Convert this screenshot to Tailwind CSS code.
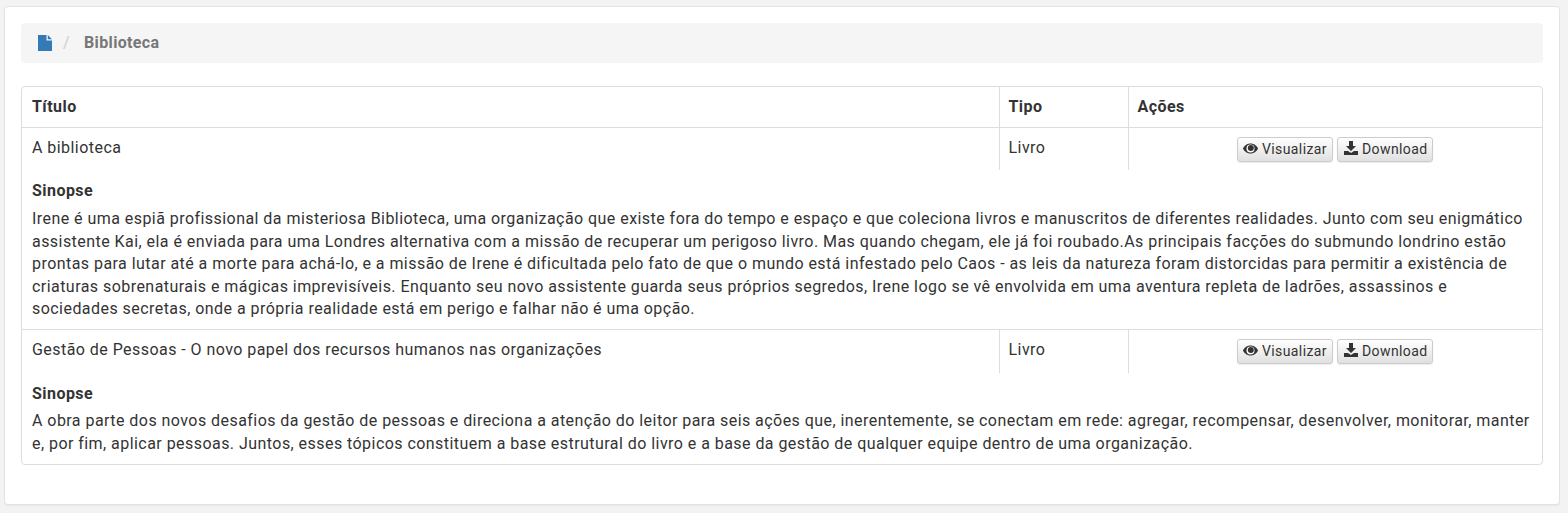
<!DOCTYPE html>
<html lang="pt">
<head>
<meta charset="utf-8">
<script src="https://cdn.jsdelivr.net/npm/@tailwindcss/browser@4"></script>
</head>
<body class="bg-[#f3f3f3] h-[513px] overflow-hidden font-['Roboto',sans-serif] text-[16px] leading-[22.4px] text-[#333] tracking-[0.45px]">
<div class="ml-[4px] mr-[8px] mt-[6px] h-[499px] bg-white rounded-[4px] border border-[#e3e3e3] shadow-[0_1px_1px_rgba(0,0,0,0.05)] px-[16px] pt-[16px]">
  <nav class="h-[40px] bg-[#f5f5f5] rounded-[4px] flex items-center pl-[17px]">
    <svg class="w-[14px] h-[16px]" viewBox="0 0 14 16"><path fill="#337ab7" d="M0 0h8.500v5.500H14V16H0zM9.800 0 14 4.200H9.800z"/></svg>
    <span class="ml-[11px] text-[#ccc]">/</span>
    <span class="ml-[14px] font-bold text-[#777] tracking-[0.35px]">Biblioteca</span>
  </nav>
  <div class="mt-[23px] border border-[#ddd] rounded-[4px] overflow-hidden">
    <table class="w-full border-collapse table-fixed">
      <colgroup><col class="w-[977px]"><col class="w-[129px]"><col></colgroup>
      <thead>
        <tr class="h-[40px] border-b border-[#ddd] text-left">
          <th class="pl-[10px] pr-[9px] font-bold">Título</th>
          <th class="px-[9px] font-bold border-l border-[#ddd]">Tipo</th>
          <th class="px-[9px] font-bold border-l border-[#ddd]">Ações</th>
        </tr>
      </thead>
      <tbody>
        <tr class="h-[43px]">
          <td class="pl-[10px] pr-[9px] pb-[1px]">A biblioteca</td>
          <td class="px-[9px] pb-[1px] border-l border-[#ddd]">Livro</td>
          <td class="border-l border-[#ddd] pt-[1px]">
            <div class="flex justify-center gap-[4px] pr-[1px] tracking-[0.4px]">
              <button class="h-[25px] px-[5px] flex items-center gap-[4px] text-[14px] rounded-[3px] border border-[#ccc] bg-linear-to-b from-white to-[#e0e0e0] shadow-[0_1px_1px_rgba(0,0,0,0.08)]">
                <svg class="w-[15px] h-[14px]" viewBox="0 0 15 14"><path fill="#333" d="M7.500 1.500C11 1.500 13.800 3.800 15 6.500 13.800 9.200 11 11.500 7.500 11.500S1.200 9.200 0 6.500C1.200 3.800 4 1.500 7.500 1.500z"/><circle cx="7.500" cy="6.500" r="4" fill="#fff"/><circle cx="7.800" cy="6" r="3" fill="#333"/></svg>
                Visualizar</button>
              <button class="h-[25px] pl-[6px] pr-[4px] flex items-center gap-[4px] text-[14px] rounded-[3px] border border-[#ccc] bg-linear-to-b from-white to-[#e0e0e0] shadow-[0_1px_1px_rgba(0,0,0,0.08)]">
                <svg class="w-[14px] h-[14px] mb-[2px]" viewBox="0 0 14 14"><path fill="#333" d="M5 0h4v5h3L7 10 2 5h3zM0 10h4l3 2 3-2h4v4H0z"/></svg>
                Download</button>
            </div>
          </td>
        </tr>
        <tr class="border-b border-[#ddd]">
          <td colspan="3" class="pl-[10px] pr-[9px] pt-[10px] pb-[9px]">
            <p class="font-bold mb-[6px]">Sinopse</p>
            <p>Irene é uma espiã profissional da misteriosa Biblioteca, uma organização que existe fora do tempo e espaço e que coleciona livros e manuscritos de diferentes realidades. Junto com seu enigmático assistente Kai, ela é enviada para uma Londres alternativa com a missão de recuperar um perigoso livro. Mas quando chegam, ele já foi roubado.As principais facções do submundo londrino estão prontas para lutar até a morte para achá-lo, e a missão de Irene é dificultada pelo fato de que o mundo está infestado pelo Caos - as leis da natureza foram distorcidas para permitir a existência de criaturas sobrenaturais e mágicas imprevisíveis. Enquanto seu novo assistente guarda seus próprios segredos, Irene logo se vê envolvida em uma aventura repleta de ladrões, assassinos e sociedades secretas, onde a própria realidade está em perigo e falhar não é uma opção.</p>
          </td>
        </tr>
        <tr class="h-[43px]">
          <td class="pl-[10px] pr-[9px] pb-[3px]">Gestão de Pessoas - O novo papel dos recursos humanos nas organizações</td>
          <td class="px-[9px] pb-[3px] border-l border-[#ddd]">Livro</td>
          <td class="border-l border-[#ddd] pb-[1px]">
            <div class="flex justify-center gap-[4px] pr-[1px] tracking-[0.4px]">
              <button class="h-[25px] px-[5px] flex items-center gap-[4px] text-[14px] rounded-[3px] border border-[#ccc] bg-linear-to-b from-white to-[#e0e0e0] shadow-[0_1px_1px_rgba(0,0,0,0.08)]">
                <svg class="w-[15px] h-[14px]" viewBox="0 0 15 14"><path fill="#333" d="M7.500 1.500C11 1.500 13.800 3.800 15 6.500 13.800 9.200 11 11.500 7.500 11.500S1.200 9.200 0 6.500C1.200 3.800 4 1.500 7.500 1.500z"/><circle cx="7.500" cy="6.500" r="4" fill="#fff"/><circle cx="7.800" cy="6" r="3" fill="#333"/></svg>
                Visualizar</button>
              <button class="h-[25px] pl-[6px] pr-[4px] flex items-center gap-[4px] text-[14px] rounded-[3px] border border-[#ccc] bg-linear-to-b from-white to-[#e0e0e0] shadow-[0_1px_1px_rgba(0,0,0,0.08)]">
                <svg class="w-[14px] h-[14px] mb-[2px]" viewBox="0 0 14 14"><path fill="#333" d="M5 0h4v5h3L7 10 2 5h3zM0 10h4l3 2 3-2h4v4H0z"/></svg>
                Download</button>
            </div>
          </td>
        </tr>
        <tr>
          <td colspan="3" class="pl-[10px] pr-[9px] pt-[10px] pb-[9px]">
            <p class="font-bold mb-[5px]">Sinopse</p>
            <p>A obra parte dos novos desafios da gestão de pessoas e direciona a atenção do leitor para seis ações que, inerentemente, se conectam em rede: agregar, recompensar, desenvolver, monitorar, manter e, por fim, aplicar pessoas. Juntos, esses tópicos constituem a base estrutural do livro e a base da gestão de qualquer equipe dentro de uma organização.</p>
          </td>
        </tr>
      </tbody>
    </table>
  </div>
</div>
</body>
</html>
